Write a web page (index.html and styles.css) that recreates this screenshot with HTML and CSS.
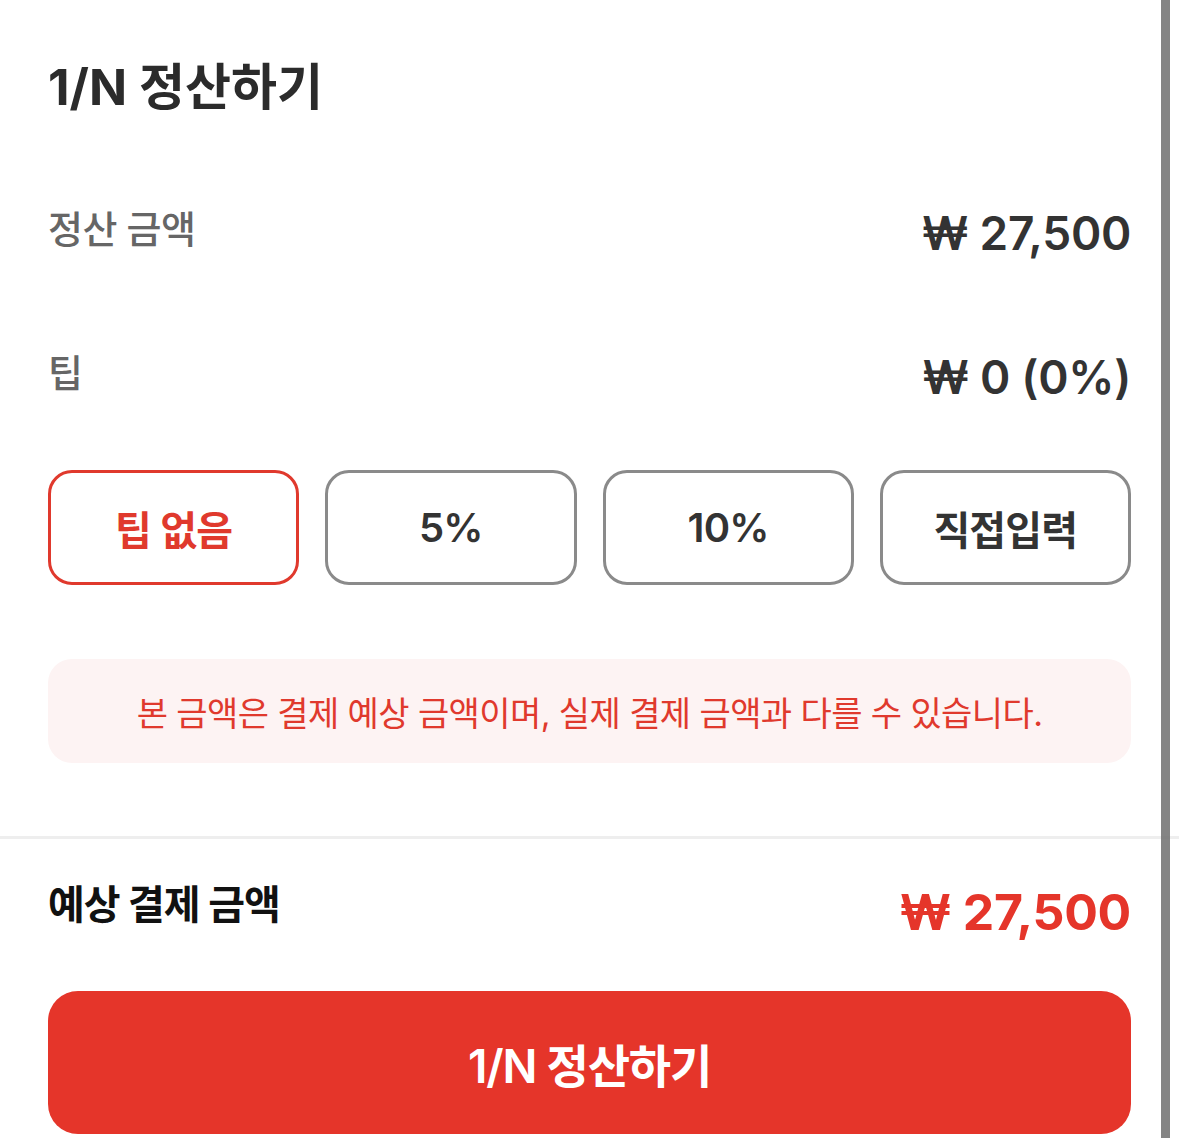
FILE: index.html
```html
<!DOCTYPE html>
<html lang="ko">
<head>
  <meta charset="UTF-8" />
  <title>1/N 정산하기</title>
  <link rel="stylesheet" href="styles.css">
</head>
<body>
  <div class="sheet">
    <h1 class="title">1/N 정산하기</h1>

    <div class="row">
      <span class="label">정산 금액</span>
      <span class="amount">₩ 27,500</span>
    </div>

    <div class="row">
      <span class="label">팁</span>
      <span class="amount">₩ 0 (0%)</span>
    </div>

    <div class="tips">
      <button class="tip active">팁 없음</button>
      <button class="tip">5%</button>
      <button class="tip">10%</button>
      <button class="tip">직접입력</button>
    </div>

    <div class="notice">본 금액은 결제 예상 금액이며, 실제 결제 금액과 다를 수 있습니다.</div>
  </div>

  <div class="footer">
    <div class="total">
      <span class="total-label">예상 결제 금액</span>
      <span class="total-amount">₩ 27,500</span>
    </div>
    <button class="submit">1/N 정산하기</button>
  </div>

  <div class="scrollbar"></div>
</body>
</html>
```

FILE: styles.css
```css
body {
  margin: 0;
  font-family: Inter, "Noto Sans CJK KR", sans-serif;
  background: #fff;
  color: #333;
  overflow: hidden;
}

/* верхняя часть листа */
.sheet {
  padding: 52px 48px 73px;
  border-bottom: 3px solid #eeeeee;
}

.title {
  margin: 0;
  font-size: 50px;
  line-height: 70px;
  font-weight: 700;
  letter-spacing: 0;
  color: #2b2b2b;
}

.row {
  display: flex;
  justify-content: space-between;
  align-items: center;
  height: 72px;
  margin-top: 75px;
}

.row + .row {
  margin-top: 72px;
}

.label {
  font-size: 38px;
  font-weight: 500;
  letter-spacing: -0.5px;
  color: #666;
  padding-bottom: 14px;
}

.amount {
  font-size: 46px;
  font-weight: 600;
  letter-spacing: -0.3px;
  color: #333;
}

/* кнопки чаевых */
.tips {
  display: grid;
  grid-template-columns: repeat(4, 1fr);
  gap: 26px;
  margin-top: 57px;
}

.tip {
  height: 115px;
  border: 3px solid #8a8a8a;
  border-radius: 24px;
  background: #fff;
  font-family: inherit;
  font-size: 40px;
  font-weight: 600;
  letter-spacing: -0.8px;
  color: #333;
  padding: 0;
}

.tip.active {
  border-color: #e0392d;
  color: #e0392d;
}

.notice {
  margin-top: 74px;
  height: 104px;
  display: flex;
  align-items: center;
  justify-content: center;
  background: #fdf3f3;
  border-radius: 24px;
  font-size: 34px;
  letter-spacing: -0.6px;
  color: #e0392d;
}

/* итог и кнопка */
.footer {
  padding: 37px 48px 0;
}

.total {
  display: flex;
  justify-content: space-between;
  align-items: center;
  height: 72px;
}

.total-label {
  font-size: 40px;
  font-weight: 700;
  letter-spacing: -1px;
  color: #111;
  padding-bottom: 20px;
}

.total-amount {
  font-size: 50px;
  font-weight: 700;
  letter-spacing: -0.3px;
  color: #e5352a;
}

.submit {
  display: block;
  width: 100%;
  height: 143px;
  margin-top: 43px;
  border: none;
  border-radius: 30px;
  background: #e5352a;
  color: #fff;
  font-family: inherit;
  font-size: 46px;
  font-weight: 600;
  letter-spacing: -1.2px;
}

.scrollbar {
  position: absolute;
  top: 0;
  right: 9px;
  width: 9px;
  height: 100%;
  background: rgba(110, 110, 110, 0.85);
}
```
